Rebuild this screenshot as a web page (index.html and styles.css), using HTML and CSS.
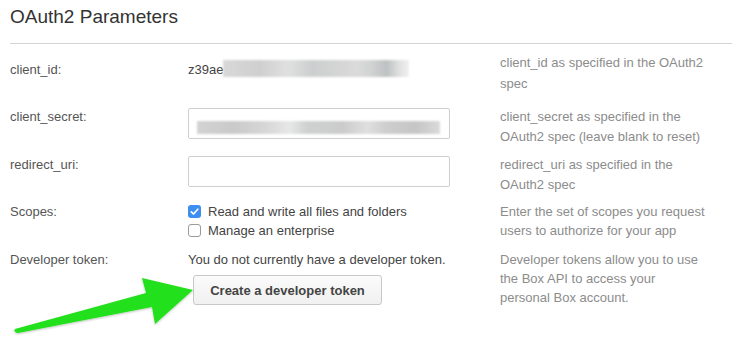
FILE: index.html
```html
<!DOCTYPE html>
<html lang="en">
<head>
    <meta charset="UTF-8">
    <title>OAuth2 Parameters</title>
    <link rel="stylesheet" href="styles.css">
</head>
<body>
    <div class="panel">
        <h2>OAuth2 Parameters</h2>
        <hr>

        <div class="row row-id">
            <div class="label">client_id:</div>
            <div class="value">z39ae<span class="blur blur-id"></span></div>
            <div class="help">client_id as specified in the OAuth2<br>spec</div>
        </div>

        <div class="row row-secret">
            <div class="label">client_secret:</div>
            <div class="value">
                <div class="field"><span class="blur blur-secret"></span></div>
            </div>
            <div class="help">client_secret as specified in the<br>OAuth2 spec (leave blank to reset)</div>
        </div>

        <div class="row row-redirect">
            <div class="label">redirect_uri:</div>
            <div class="value">
                <div class="field"></div>
            </div>
            <div class="help">redirect_uri as specified in the<br>OAuth2 spec</div>
        </div>

        <div class="row row-scopes">
            <div class="label">Scopes:</div>
            <div class="value">
                <div class="check-line">
                    <span class="box checked">
                        <svg width="13" height="13" viewBox="0 0 13 13"><path d="M3.3 6.8 L5.5 9 L9.8 4.2" fill="none" stroke="#fff" stroke-width="1.7" stroke-linecap="round" stroke-linejoin="round"/></svg>
                    </span>
                    Read and write all files and folders
                </div>
                <div class="check-line">
                    <span class="box"></span>
                    Manage an enterprise
                </div>
            </div>
            <div class="help">Enter the set of scopes you request<br>users to authorize for your app</div>
        </div>

        <div class="row row-token">
            <div class="label">Developer token:</div>
            <div class="value">
                <div>You do not currently have a developer token.</div>
                <button class="btn">Create a developer token</button>
            </div>
            <div class="help">Developer tokens allow you to use<br>the Box API to access your<br>personal Box account.</div>
        </div>

        <!-- annotation arrow drawn over the form -->
        <svg class="arrow" width="200" height="70" viewBox="0 0 200 70">
            <defs>
                <filter id="sh" x="-10%" y="-10%" width="120%" height="130%">
                    <feDropShadow dx="0" dy="1" stdDeviation="1" flood-color="#000" flood-opacity="0.25"/>
                </filter>
            </defs>
            <path d="M15 59 L146 23 L142 8 L193 20 L155 54 L152 37 L18 63 Q13 62 15 59 Z" fill="#22e01a" filter="url(#sh)"/>
        </svg>
    </div>
</body>
</html>
```

FILE: styles.css
```css
* {
    margin: 0;
    padding: 0;
    box-sizing: border-box;
}

body {
    font-family: "Helvetica Neue", "Liberation Sans", Arial, sans-serif;
    font-size: 13px;
    color: #444;
    background: #fff;
}

.panel {
    position: relative;
    width: 741px;
    height: 352px;
}

h2 {
    font-size: 19px;
    font-weight: normal;
    color: #333;
    line-height: 24px;
    padding: 5px 10px 0;
}

hr {
    border: none;
    border-top: 1px solid #d4d4d4;
    margin: 14px 9px 0 10px;
}

.row {
    display: grid;
    grid-template-columns: 178px 312px 1fr;
    padding: 0 10px;
    line-height: 20px;
}

.label {
    color: #555;
}

.help {
    color: #8c8c8c;
}

.row-id {
    margin-top: 8px;
    height: 55px;
}

.row-id .label,
.row-id .value {
    padding-top: 8px;
}

.row-id .help {
    line-height: 21px;
}

.row-secret {
    height: 48px;
}

.row-redirect {
    height: 47px;
}

.row-scopes {
    height: 48px;
}

.row-scopes .help,
.row-token .help {
    line-height: 19px;
}

.field {
    width: 262px;
    height: 31px;
    margin-top: 1px;
    border: 1px solid #cfcfcf;
    border-radius: 2px;
    background: #fff;
    padding: 8px 8px 0;
}

.blur {
    display: inline-block;
    vertical-align: middle;
    filter: blur(1.2px);
}

.blur-id {
    width: 186px;
    height: 17px;
    margin-top: -4px;
    background:
        linear-gradient(90deg, #cfcfcf 0, #c4c4c4 20%, #d9d9d9 35%, #c0c4c4 48%, #cbcbcb 62%, #d2d2d2 72%, #c6c8c8 80%, #aeb3b3 88%, #d6d6d6 94%, #eee 100%);
    opacity: 0.8;
}

.blur-secret {
    width: 243px;
    height: 13px;
    background:
        linear-gradient(90deg, #c8c8c8 0, #bdbdbd 15%, #cdcdcd 28%, #e2e2e2 38%, #c4c6c6 45%, #bfbfbf 60%, #d8d8d8 70%, #c2c2c2 78%, #b8b8b8 90%, #d2d2d2 100%);
    opacity: 0.8;
}

.check-line {
    display: flex;
    align-items: center;
    gap: 7px;
    line-height: 19px;
    color: #444;
}

.box {
    width: 13px;
    height: 13px;
    border: 1px solid #9a9a9a;
    border-radius: 3px;
    background: #fff;
    display: flex;
}

.box.checked {
    border: none;
    background: #3c8ef0;
}

.btn {
    margin: 5px 0 0 5px;
    width: 189px;
    height: 30px;
    font-family: inherit;
    font-size: 13px;
    font-weight: bold;
    color: #444;
    background: linear-gradient(#fbfbfb, #f0f0f0);
    border: 1px solid #c8c8c8;
    border-radius: 3px;
}

.arrow {
    position: absolute;
    left: 0;
    top: 270px;
}
```
